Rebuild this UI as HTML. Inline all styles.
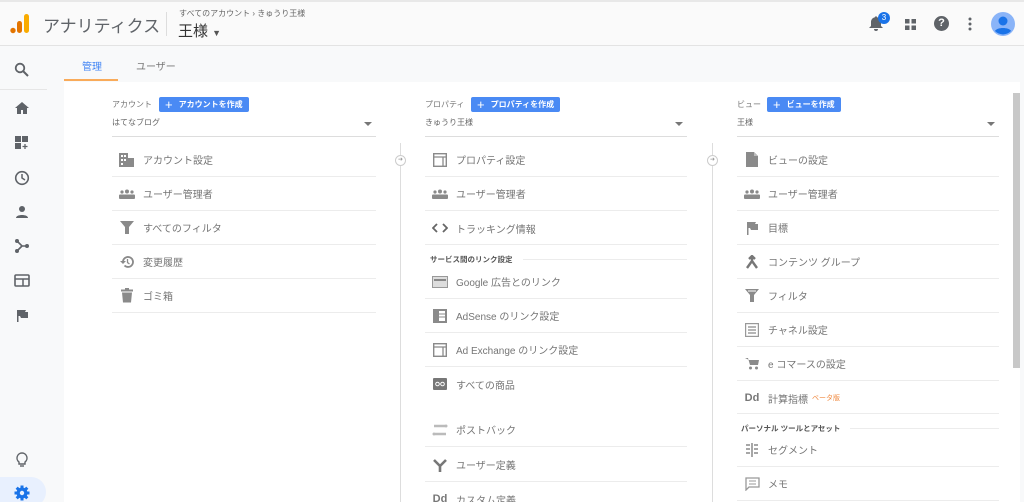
<!DOCTYPE html>
<html><head><meta charset="utf-8"><style>
*{margin:0;padding:0;box-sizing:border-box}
html,body{width:1024px;height:502px;overflow:hidden}
body{background:#f8f9fa;font-family:"Liberation Sans","Noto Sans CJK JP",sans-serif;position:relative;color:#757575}
.a{position:absolute}
.hdr{left:0;top:0;width:1024px;height:46px;background:#fafafa;border-bottom:1px solid #e3e3e3;border-top:2px solid #e8e8e8}
.side{left:0;top:47px;width:64px;height:455px;background:#f8f9fa}
.panel{left:64px;top:82px;width:956px;height:420px;background:#fff}
.row{position:absolute;height:34px;border-bottom:1px solid #ececec;font-size:10px;display:flex;align-items:center;color:#757575}
.row .ic{width:16px;height:16px;margin-left:7px;margin-right:8px;display:flex;align-items:center;justify-content:center}
.sec{position:absolute;font-size:7.5px;font-weight:bold;color:#555;display:flex;align-items:center}
.sec:after{content:"";flex:1;height:1px;background:#ececec;margin-left:10px}
.btn{position:absolute;height:15px;background:#4a8af4;color:#fff;font-size:8px;font-weight:bold;border-radius:2px;display:flex;align-items:center;padding:0 6px}
.btn b{font-size:13px;margin-right:6px;font-weight:normal;line-height:1}
.lab{position:absolute;font-size:8px;color:#777}
.sel{position:absolute;height:20px;border-bottom:1px solid #ddd;font-size:8px;color:#666}
.sel:after{content:"";position:absolute;right:4px;top:5px;border:4px solid transparent;border-top:4px solid #777}
.vl{position:absolute;top:143px;width:1px;height:360px;background:#ddd}
.cir{position:absolute;width:11px;height:11px;border:1px solid #ccc;border-radius:50%;background:#fff;font-size:6px;text-align:center;line-height:9px;color:#999}
svg *{}
</style></head><body>
<div class="a hdr"></div>
<svg class="a" style="left:10px;top:13px" width="20" height="22"><circle cx="3" cy="17.5" r="2.7" fill="#e37400"/><rect x="7" y="8" width="5" height="12" rx="2.5" fill="#e37400"/><rect x="14" y="1" width="5" height="19" rx="2.5" fill="#f9ab00"/></svg>
<div class="a" style="left:43px;top:12px;font-size:17px;color:#5f6368;white-space:nowrap">アナリティクス</div>
<div class="a" style="left:166px;top:12px;width:1px;height:24px;background:#ddd"></div>
<div class="a" style="left:179px;top:8px;font-size:8px;color:#666;white-space:nowrap">すべてのアカウント › きゅうり王様</div>
<div class="a" style="left:178px;top:20px;font-size:15px;color:#333;white-space:nowrap">王様 <span style="font-size:9px;color:#555">▼</span></div>
<svg class="a" style="left:868px;top:15px" width="16" height="17"><path d="M8 16a2 2 0 0 0 2-2H6a2 2 0 0 0 2 2zm5-5V7c0-2.5-1.5-4.3-4-4.8V1.5h-2v.7C4.5 2.7 3 4.5 3 7v4l-2 2h14z" fill="#5f6368"/></svg>
<div class="a" style="left:878px;top:12px;width:12px;height:12px;border-radius:50%;background:#1a73e8;color:#fff;font-size:8px;text-align:center;line-height:12px">3</div>
<svg class="a" style="left:905px;top:19px" width="11" height="11"><rect width="4.5" height="4.5" fill="#5f6368"/><rect x="6.5" width="4.5" height="4.5" fill="#5f6368"/><rect y="6.5" width="4.5" height="4.5" fill="#5f6368"/><rect x="6.5" y="6.5" width="4.5" height="4.5" fill="#5f6368"/></svg>
<div class="a" style="left:934px;top:16px;width:15px;height:15px;border-radius:50%;background:#5f6368;color:#fff;font-size:11px;font-weight:bold;text-align:center;line-height:15px">?</div>
<svg class="a" style="left:968px;top:17px" width="4" height="14"><circle cx="2" cy="2" r="1.5" fill="#5f6368"/><circle cx="2" cy="7" r="1.5" fill="#5f6368"/><circle cx="2" cy="12" r="1.5" fill="#5f6368"/></svg>
<svg class="a" style="left:991px;top:12px" width="24" height="24"><circle cx="12" cy="12" r="12" fill="#8ab4f8"/><circle cx="12" cy="9" r="4.5" fill="#1a73e8"/><path d="M4 19c2-4 14-4 16 0a11 11 0 0 1-16 0z" fill="#1a73e8"/></svg>
<div class="a side"></div>
<div class="a" style="left:0;top:89px;width:47px;height:1px;background:#e6e6e6"></div>
<svg class="a" style="left:14px;top:62px" width="16" height="16"><circle cx="6" cy="6" r="4.3" stroke="#5f6368" stroke-width="1.8" fill="none"/><path d="M9 9l5 5" stroke="#5f6368" stroke-width="2"/></svg>
<svg class="a" style="left:14px;top:101px" width="16" height="14"><path d="M8 1L1 7h2v6h4V9h2v4h4V7h2z" fill="#5f6368"/></svg>
<svg class="a" style="left:15px;top:136px" width="14" height="14"><rect width="6" height="6" fill="#5f6368"/><rect x="7" width="6" height="6" fill="#5f6368"/><rect y="7" width="6" height="6" fill="#5f6368"/><path d="M10 8v5M7.5 10.5h5" stroke="#5f6368" stroke-width="1.3"/></svg>
<svg class="a" style="left:14px;top:170px" width="16" height="16"><circle cx="8" cy="8" r="6.3" stroke="#5f6368" stroke-width="1.6" fill="none"/><path d="M8 4v4l3 2" stroke="#5f6368" stroke-width="1.5" fill="none"/></svg>
<svg class="a" style="left:15px;top:205px" width="14" height="14"><circle cx="7" cy="4" r="3" fill="#5f6368"/><path d="M1 13c0-4 12-4 12 0z" fill="#5f6368"/></svg>
<svg class="a" style="left:14px;top:238px" width="16" height="16"><path d="M3 3l5 5h6M3 13l5-5" stroke="#5f6368" stroke-width="1.6" fill="none"/><circle cx="3" cy="3" r="2" fill="#5f6368"/><circle cx="3" cy="13" r="2" fill="#5f6368"/><circle cx="13" cy="8" r="2" fill="#5f6368"/></svg>
<svg class="a" style="left:14px;top:274px" width="16" height="13"><rect x="1" y="1" width="14" height="11" rx="1" stroke="#5f6368" stroke-width="1.6" fill="none"/><path d="M1 5h14M9 5v7" stroke="#5f6368" stroke-width="1.5"/></svg>
<svg class="a" style="left:16px;top:309px" width="12" height="13"><path d="M1 1h9l-1 2h3v6H5l-1-2H2.5v6H1z" fill="#5f6368"/></svg>
<svg class="a" style="left:16px;top:452px" width="12" height="16"><path d="M6 1a5 5 0 0 0-3 9v2h6v-2a5 5 0 0 0-3-9z" stroke="#5f6368" stroke-width="1.4" fill="none"/><path d="M4 14h4" stroke="#5f6368" stroke-width="1.4"/></svg>
<div class="a" style="left:0;top:477px;width:46px;height:30px;background:#e8f0fe;border-radius:0 15px 15px 0"></div>
<svg class="a" style="left:14px;top:485px" width="16" height="16"><g fill="#1a73e8"><circle cx="8" cy="8" r="5.5"/><rect x="6.5" y="0.5" width="3" height="15"/><rect x="0.5" y="6.5" width="15" height="3"/><rect x="6.5" y="0.5" width="3" height="15" transform="rotate(45 8 8)"/><rect x="6.5" y="0.5" width="3" height="15" transform="rotate(-45 8 8)"/></g><circle cx="8" cy="8" r="2.2" fill="#e8f0fe"/></svg>
<div class="a" style="left:64px;top:47px;width:960px;height:35px;background:#f8f9fa"></div>
<div class="a" style="left:82px;top:58px;font-size:10px;color:#4285f4">管理</div>
<div class="a" style="left:64px;top:79px;width:54px;height:2px;background:#f9ab5a"></div>
<div class="a" style="left:136px;top:58px;font-size:10px;color:#777">ユーザー</div>
<div class="a panel"></div>
<div class="a" style="left:1013px;top:93px;width:7px;height:275px;background:#c8c8c8"></div>
<div class="lab" style="left:112px;top:99px">アカウント</div>
<div class="btn" style="left:159px;top:97px"><b>+</b>アカウントを作成</div>
<div class="sel" style="left:112px;top:117px;width:264px">はてなブログ</div>
<div class="lab" style="left:425px;top:99px">プロパティ</div>
<div class="btn" style="left:471px;top:97px"><b>+</b>プロパティを作成</div>
<div class="sel" style="left:425px;top:117px;width:262px">きゅうり王様</div>
<div class="lab" style="left:737px;top:99px">ビュー</div>
<div class="btn" style="left:767px;top:97px"><b>+</b>ビューを作成</div>
<div class="sel" style="left:737px;top:117px;width:262px">王様</div>
<div class="vl" style="left:400px"></div><div class="vl" style="left:712px"></div>
<div class="cir" style="left:395px;top:155px">➜</div><div class="cir" style="left:707px;top:155px">➜</div>
<div class="row" style="left:112px;top:143px;width:264px"><span class="ic"><svg width="16" height="15"><path d="M0 15V1h9v5h6v9z" fill="#8a8a8a"/><g fill="#fff"><rect x="2" y="3" width="2" height="2"/><rect x="5" y="3" width="2" height="2"/><rect x="2" y="7" width="2" height="2"/><rect x="5" y="7" width="2" height="2"/><rect x="2" y="11" width="2" height="2"/></g></svg></span>アカウント設定</div>
<div class="row" style="left:112px;top:177px;width:264px"><span class="ic"><svg width="16" height="10"><circle cx="3" cy="3" r="1.6" fill="#8a8a8a"/><circle cx="8" cy="2.5" r="2" fill="#8a8a8a"/><circle cx="13" cy="3" r="1.6" fill="#8a8a8a"/><rect y="5.5" width="16" height="4.5" rx="1" fill="#8a8a8a"/></svg></span>ユーザー管理者</div>
<div class="row" style="left:112px;top:211px;width:264px"><span class="ic"><svg width="14" height="13"><path d="M0 0h14L9 6v7H5V6z" fill="#8a8a8a"/></svg></span>すべてのフィルタ</div>
<div class="row" style="left:112px;top:245px;width:264px"><span class="ic"><svg width="14" height="14"><path d="M3 7a5 5 0 1 1 1.5 3.5" stroke="#8a8a8a" stroke-width="1.8" fill="none"/><path d="M0 6l3 3 3-3z" fill="#8a8a8a"/><path d="M7.5 4v3.5l2 1.5" stroke="#8a8a8a" stroke-width="1.3" fill="none"/></svg></span>変更履歴</div>
<div class="row" style="left:112px;top:279px;width:264px"><span class="ic"><svg width="12" height="15"><rect x="0" y="1.5" width="12" height="2" fill="#8a8a8a"/><rect x="4" y="0" width="4" height="2" fill="#8a8a8a"/><path d="M1 4.5h10l-1 10H2z" fill="#8a8a8a"/></svg></span>ゴミ箱</div>
<div class="row" style="left:425px;top:143px;width:262px"><span class="ic"><svg width="14" height="14"><rect x=".7" y=".7" width="12.6" height="12.6" stroke="#8a8a8a" stroke-width="1.4" fill="none"/><path d="M1 4h12M10 4v9" stroke="#8a8a8a" stroke-width="1.3"/></svg></span>プロパティ設定</div>
<div class="row" style="left:425px;top:177px;width:262px"><span class="ic"><svg width="16" height="10"><circle cx="3" cy="3" r="1.6" fill="#8a8a8a"/><circle cx="8" cy="2.5" r="2" fill="#8a8a8a"/><circle cx="13" cy="3" r="1.6" fill="#8a8a8a"/><rect y="5.5" width="16" height="4.5" rx="1" fill="#8a8a8a"/></svg></span>ユーザー管理者</div>
<div class="row" style="left:425px;top:211px;width:262px;border:0"><span class="ic"><svg width="16" height="10"><path d="M5 1L1 5l4 4M11 1l4 4-4 4" stroke="#666" stroke-width="1.8" fill="none"/></svg></span>トラッキング情報</div>
<div class="a" style="left:425px;top:244px;width:262px;height:1px;background:#ececec"></div>
<div class="sec" style="left:430px;top:254px;width:257px">サービス間のリンク設定</div>
<div class="row" style="left:425px;top:265px;width:262px"><span class="ic"><svg width="16" height="12"><rect x=".5" y=".5" width="15" height="11" fill="#ddd" stroke="#999"/><rect x="2" y="3" width="12" height="2" fill="#888"/></svg></span>Google 広告とのリンク</div>
<div class="row" style="left:425px;top:299px;width:262px"><span class="ic"><svg width="14" height="14"><rect width="14" height="14" fill="#8a8a8a"/><rect x="6" y="2" width="6" height="10" fill="#fff"/><path d="M6 5h6M6 8h6" stroke="#8a8a8a"/></svg></span>AdSense のリンク設定</div>
<div class="row" style="left:425px;top:333px;width:262px"><span class="ic"><svg width="14" height="14"><rect x=".7" y=".7" width="12.6" height="12.6" stroke="#8a8a8a" stroke-width="1.4" fill="none"/><path d="M1 4h12M10 4v9" stroke="#8a8a8a" stroke-width="1.3"/></svg></span>Ad Exchange のリンク設定</div>
<div class="row" style="left:425px;top:367px;width:262px;border:0"><span class="ic"><svg width="14" height="12"><rect width="14" height="12" rx="1" fill="#777"/><circle cx="4.5" cy="6" r="1.8" stroke="#fff" fill="none"/><circle cx="9.5" cy="6" r="1.8" stroke="#fff" fill="none"/></svg></span>すべての商品</div>
<div class="row" style="left:425px;top:413px;width:262px"><span class="ic"><svg width="16" height="14"><path d="M2 3h11M3 11h11" stroke="#bbb" stroke-width="2.5"/><circle cx="14" cy="3" r="1.5" fill="#bbb"/><circle cx="2" cy="11" r="1.5" fill="#bbb"/></svg></span>ポストバック</div>
<div class="row" style="left:425px;top:448px;width:262px"><span class="ic"><svg width="14" height="14"><path d="M1 2l6 6v6M13 2L7 8" stroke="#777" stroke-width="2.6" fill="none"/></svg></span>ユーザー定義</div>
<div class="row" style="left:425px;top:482px;width:262px;border:0"><span class="ic" style="font-weight:bold;font-size:11px;color:#777">Dd</span>カスタム定義</div>
<div class="row" style="left:737px;top:143px;width:262px"><span class="ic"><svg width="12" height="15"><path d="M0 0h8l4 4v11H0z" fill="#8a8a8a"/><path d="M8 0v4h4" fill="#bbb"/></svg></span>ビューの設定</div>
<div class="row" style="left:737px;top:177px;width:262px"><span class="ic"><svg width="16" height="10"><circle cx="3" cy="3" r="1.6" fill="#8a8a8a"/><circle cx="8" cy="2.5" r="2" fill="#8a8a8a"/><circle cx="13" cy="3" r="1.6" fill="#8a8a8a"/><rect y="5.5" width="16" height="4.5" rx="1" fill="#8a8a8a"/></svg></span>ユーザー管理者</div>
<div class="row" style="left:737px;top:211px;width:262px"><span class="ic"><svg width="13" height="14"><path d="M1 1h9l-1 2h3v6H5l-1-2H2.5v7H1z" fill="#8a8a8a"/></svg></span>目標</div>
<div class="row" style="left:737px;top:245px;width:262px"><span class="ic"><svg width="14" height="14"><path d="M2 13l5-7 5 7M7 6V1M4 4l3-3 3 3" stroke="#777" stroke-width="2.4" fill="none"/></svg></span>コンテンツ グループ</div>
<div class="row" style="left:737px;top:279px;width:262px"><span class="ic"><svg width="14" height="13"><path d="M0 0h14L9 6v7H5V6z" fill="#8a8a8a"/><path d="M3 2h8" stroke="#fff"/></svg></span>フィルタ</div>
<div class="row" style="left:737px;top:313px;width:262px"><span class="ic"><svg width="14" height="14"><rect x=".6" y=".6" width="12.8" height="12.8" stroke="#999" stroke-width="1.2" fill="none"/><path d="M3 4h8M3 7h8M3 10h8" stroke="#8a8a8a" stroke-width="1.3"/></svg></span>チャネル設定</div>
<div class="row" style="left:737px;top:347px;width:262px"><span class="ic"><svg width="14" height="13"><path d="M0 1h3l2 7h8l1-5H4" fill="#8a8a8a"/><circle cx="5.5" cy="11" r="1.5" fill="#8a8a8a"/><circle cx="11.5" cy="11" r="1.5" fill="#8a8a8a"/></svg></span>e コマースの設定</div>
<div class="row" style="left:737px;top:381px;width:262px;border:0"><span class="ic" style="font-weight:bold;font-size:11px;color:#777">Dd</span>計算指標 <span style="color:#f0883e;font-size:7px;margin-left:4px">ベータ版</span></div>
<div class="a" style="left:737px;top:413px;width:262px;height:1px;background:#ececec"></div>
<div class="sec" style="left:741px;top:423px;width:258px">パーソナル ツールとアセット</div>
<div class="row" style="left:737px;top:433px;width:262px"><span class="ic"><svg width="14" height="14"><path d="M1 2h4M1 6h4M1 10h4M9 2h4M9 6h4M9 10h4M7 0v14" stroke="#8a8a8a" stroke-width="1.5"/></svg></span>セグメント</div>
<div class="row" style="left:737px;top:467px;width:262px"><span class="ic"><svg width="15" height="14"><path d="M1 1h13v9H4l-3 3z" stroke="#999" stroke-width="1.3" fill="none"/><path d="M4 4h7M4 7h7" stroke="#999"/></svg></span>メモ</div>
</body></html>
